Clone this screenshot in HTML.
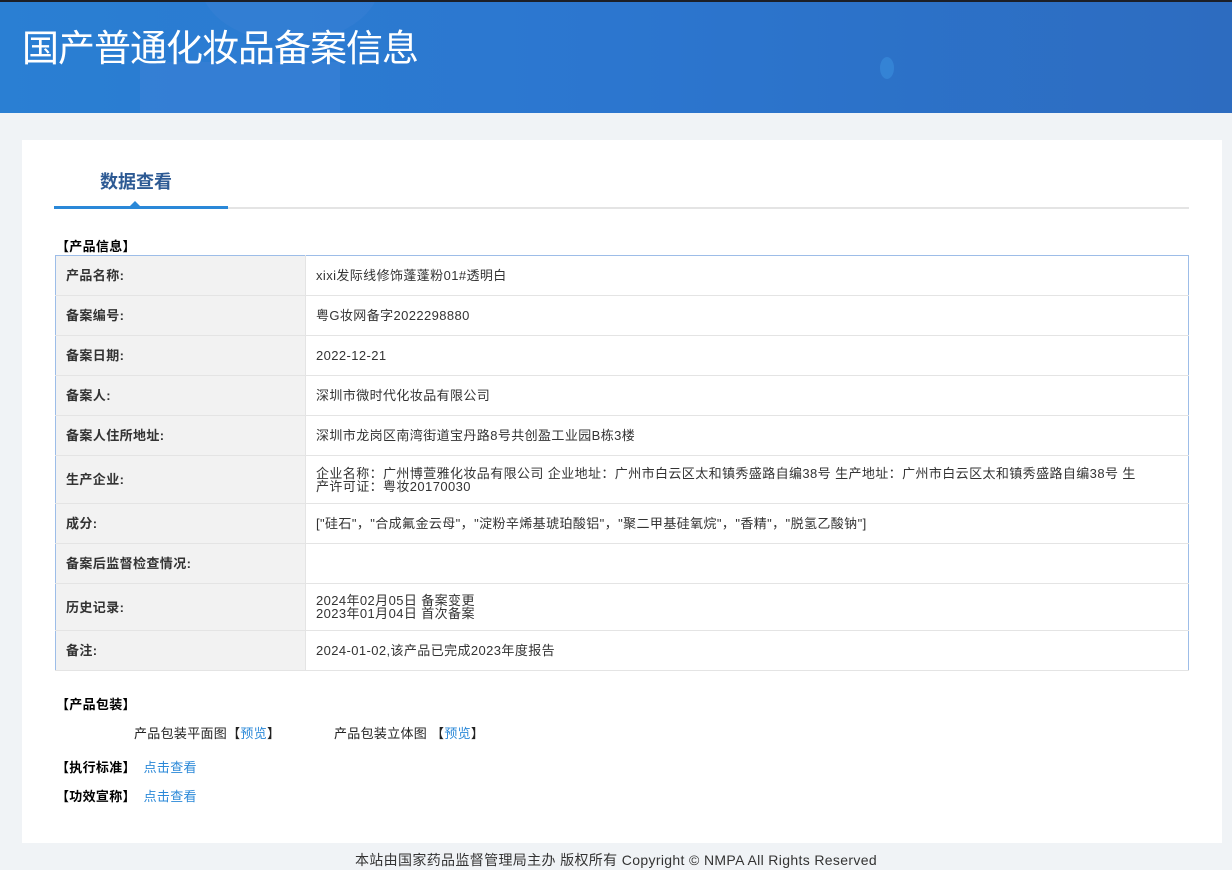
<!DOCTYPE html>
<html><head><meta charset="utf-8"><style>
*{margin:0;padding:0;box-sizing:border-box}
body{width:1232px;height:870px;background:#f0f3f6;font-family:"Liberation Sans","Noto Sans CJK SC",sans-serif;color:#333;position:relative;overflow:hidden}
.top{position:absolute;left:0;top:0;width:1232px;height:2px;background:#1c1f27}
.hd{position:absolute;left:0;top:2px;width:1232px;height:111px;background:linear-gradient(90deg,#2a7fd3 0%,#2c76cf 50%,#2d6cc0 100%);overflow:hidden}
.hd .b1{position:absolute;left:140px;top:60px;width:200px;height:60px;background:#3a80d6;opacity:.6}
.hd .b2{position:absolute;left:200px;top:-80px;width:180px;height:120px;border-radius:50%;background:#3f84d6;opacity:.35}
.hd .b3{position:absolute;left:880px;top:55px;width:14px;height:22px;border-radius:50%;background:#3a8fde;opacity:.6}
.hd h1{position:absolute;left:22px;top:16px;font-size:37px;font-weight:normal;color:#fff;letter-spacing:-1px}
.card{position:absolute;left:22px;top:140px;width:1200px;height:703px;background:#fff}
.tab{position:absolute;left:78px;top:28px;font-size:18px;font-weight:bold;color:#2d5a94}
.ul{position:absolute;left:32px;top:67px;width:1135px;height:2px;background:#e4e4e4}
.ulb{position:absolute;left:32px;top:66px;width:174px;height:3px;background:#2a88d8}
.tri{position:absolute;left:107px;top:61px;width:0;height:0;border-left:6px solid transparent;border-right:6px solid transparent;border-bottom:6px solid #2a88d8}
.sec{position:absolute;font-size:13px;font-weight:bold;color:#000;letter-spacing:.3px}
table{position:absolute;left:33px;top:115px;width:1134px;border-collapse:collapse;border:1px solid #9dbde8;font-size:13px;letter-spacing:.4px}
td{border-bottom:1px solid #e4e4e4;padding:0 10px;line-height:13px}
td.l{width:250px;background:#f2f2f2;font-weight:bold;border-right:1px solid #e4e4e4}
.p{position:absolute;font-size:13px;color:#222;letter-spacing:.3px}
a{color:#2a88d8;text-decoration:none}
.ft{position:absolute;left:0;top:850px;width:1232px;text-align:center;font-size:14px;color:#333;letter-spacing:.35px}
</style></head><body>
<div class="top"></div>
<div class="hd"><div class="b2"></div><div class="b1"></div><div class="b3"></div><h1>国产普通化妆品备案信息</h1></div>
<div class="card">
<div class="tab">数据查看</div>
<div class="ul"></div><div class="ulb"></div><div class="tri"></div>
<div class="sec" style="left:34px;top:96px">【产品信息】</div>
<table>
<tr style="height:40px"><td class="l">产品名称:</td><td>xixi发际线修饰蓬蓬粉01#透明白</td></tr>
<tr style="height:40px"><td class="l">备案编号:</td><td>粤G妆网备字2022298880</td></tr>
<tr style="height:40px"><td class="l">备案日期:</td><td>2022-12-21</td></tr>
<tr style="height:40px"><td class="l">备案人:</td><td>深圳市微时代化妆品有限公司</td></tr>
<tr style="height:40px"><td class="l">备案人住所地址:</td><td>深圳市龙岗区南湾街道宝丹路8号共创盈工业园B栋3楼</td></tr>
<tr style="height:48px"><td class="l">生产企业:</td><td>企业名称：广州博萱雅化妆品有限公司 企业地址：广州市白云区太和镇秀盛路自编38号 生产地址：广州市白云区太和镇秀盛路自编38号 生<br>产许可证：粤妆20170030</td></tr>
<tr style="height:40px"><td class="l">成分:</td><td>["硅石"，"合成氟金云母"，"淀粉辛烯基琥珀酸铝"，"聚二甲基硅氧烷"，"香精"，"脱氢乙酸钠"]</td></tr>
<tr style="height:40px"><td class="l">备案后监督检查情况:</td><td></td></tr>
<tr style="height:47px"><td class="l">历史记录:</td><td>2024年02月05日 备案变更<br>2023年01月04日 首次备案</td></tr>
<tr style="height:40px"><td class="l">备注:</td><td>2024-01-02,该产品已完成2023年度报告</td></tr>
</table>
<div class="sec" style="left:34px;top:554px">【产品包装】</div>
<div class="p" style="left:112px;top:583px">产品包装平面图【<a>预览</a>】</div>
<div class="p" style="left:312px;top:583px">产品包装立体图 【<a>预览</a>】</div>
<div class="sec" style="left:34px;top:617px">【执行标准】 &nbsp;<a style="font-weight:normal">点击查看</a></div>
<div class="sec" style="left:34px;top:646px">【功效宣称】 &nbsp;<a style="font-weight:normal">点击查看</a></div>
</div>
<div class="ft">本站由国家药品监督管理局主办 版权所有 Copyright © NMPA All Rights Reserved</div>
</body></html>
